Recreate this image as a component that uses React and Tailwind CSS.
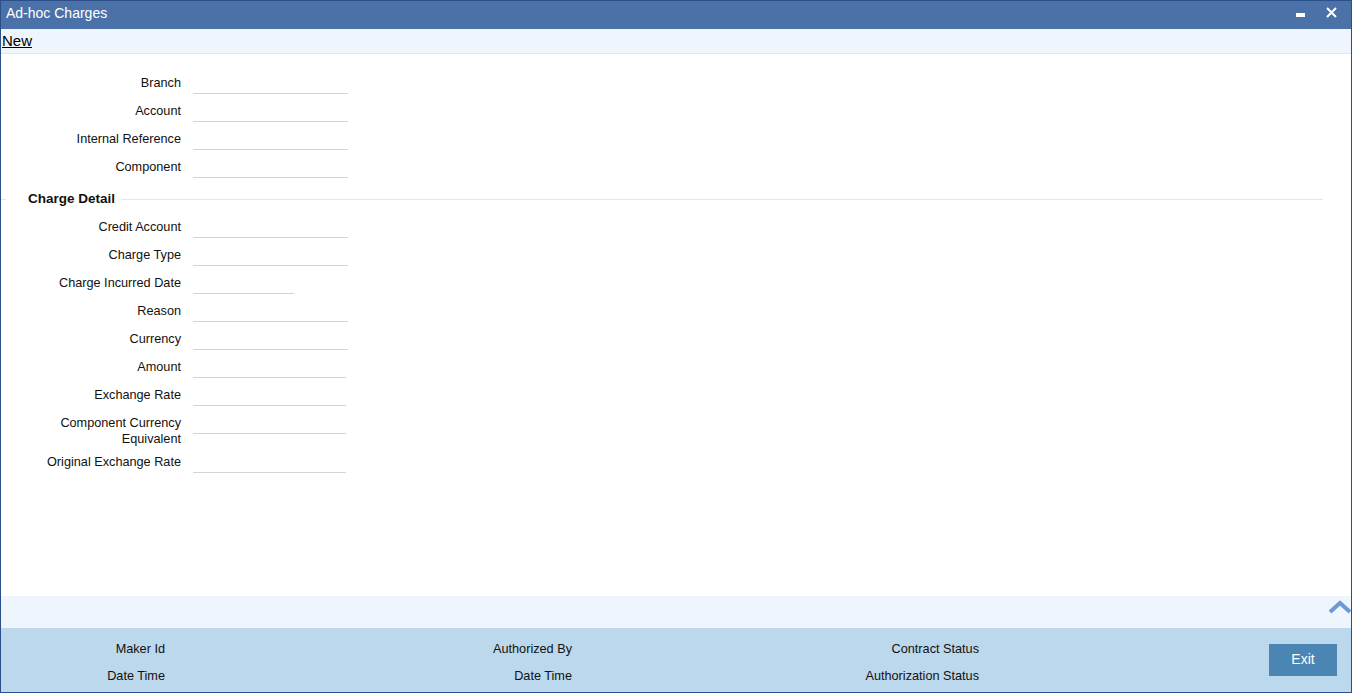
import React from 'react';

const topFields = [
    { label: 'Branch' },
    { label: 'Account' },
    { label: 'Internal Reference' },
    { label: 'Component' }
];

const detailFields = [
    { label: 'Credit Account' },
    { label: 'Charge Type' },
    { label: 'Charge Incurred Date', width: 'w-[101px]' },
    { label: 'Reason' },
    { label: 'Currency' },
    { label: 'Amount', width: 'w-[153px]' },
    { label: 'Exchange Rate', width: 'w-[153px]' }
];

const FieldRow = ({ label, width = 'w-[155px]' }) => (
    <div className="flex h-[28px] items-start">
        <div className="w-[180px] pt-[1px] text-right leading-[28px]">{label}</div>
        <div className={`ml-[12px] h-[26px] border-b border-[#d4d4d4] ${width}`} />
    </div>
);

const FooterCol = ({ top, bottom }) => (
    <div className="flex w-[407px] flex-col gap-[9px]">
        <div className="w-[164px] text-right leading-[18px]">{top}</div>
        <div className="w-[164px] text-right leading-[18px]">{bottom}</div>
    </div>
);

export default function App() {
    return (
        <div
            className="flex h-[693px] w-full flex-col border border-[#2c4f8b] bg-white text-[12.7px] text-[#111]"
            style={{ fontFamily: '"Liberation Sans", Arial, sans-serif' }}
        >
            {/* title bar */}
            <div className="flex h-[28px] items-center bg-[#4a72a8] pb-[3px] pl-[5px] pr-[14px] text-white">
                <span className="text-[14px]">Ad-hoc Charges</span>
                <div className="ml-auto flex items-center">
                    <div className="mt-[3px] h-[4px] w-[9px] bg-white" />
                    <svg className="ml-[21px] -mt-[3px]" width="11" height="11" viewBox="0 0 11 11">
                        <path d="M1 1 L10 10 M10 1 L1 10" stroke="white" strokeWidth="2" />
                    </svg>
                </div>
            </div>

            {/* toolbar */}
            <div className="flex h-[25px] items-center border-b border-[#e0e6ee] bg-[#eef5fd] pl-[1px]">
                <span className="text-[15px] text-black underline">New</span>
            </div>

            {/* form */}
            <div className="flex flex-1 flex-col pt-[14px]">
                {topFields.map((f) => (
                    <FieldRow key={f.label} {...f} />
                ))}

                <div className="flex h-[32px] items-center pt-[6px] pr-[28px]">
                    <div className="h-px w-[5px] bg-[#e6e6e6]" />
                    <span className="ml-[22px] mr-[6px] text-[13.5px] font-bold">Charge Detail</span>
                    <div className="h-px flex-1 bg-[#e6e6e6]" />
                </div>

                {detailFields.map((f) => (
                    <FieldRow key={f.label} {...f} />
                ))}

                <div className="flex h-[39px] items-start">
                    <div className="w-[180px] pt-[7px] text-right leading-[16px]">
                        Component Currency
                        <br />
                        Equivalent
                    </div>
                    <div className="ml-[12px] h-[26px] w-[153px] border-b border-[#d4d4d4]" />
                </div>
                <FieldRow label="Original Exchange Rate" width="w-[153px]" />
            </div>

            {/* band */}
            <div className="flex h-[32px] items-start justify-end bg-[#eef5fd]">
                <svg className="-mr-[1px] mt-[3px]" width="24" height="15" viewBox="0 0 24 15">
                    <path d="M2 13 L12 4 L22 13" fill="none" stroke="#6b9bd6" strokeWidth="4" />
                </svg>
            </div>

            {/* footer */}
            <div className="flex h-[64px] items-center bg-[#bcd8ec] pr-[14px]">
                <div className="flex pt-[5px]">
                    <FooterCol top="Maker Id" bottom="Date Time" />
                    <FooterCol top="Authorized By" bottom="Date Time" />
                    <FooterCol top="Contract Status" bottom="Authorization Status" />
                </div>
                <button
                    type="button"
                    className="ml-auto h-[32px] w-[68px] bg-[#4a85b3] pb-[2px] text-[14px] text-white"
                >
                    Exit
                </button>
            </div>
        </div>
    );
}
